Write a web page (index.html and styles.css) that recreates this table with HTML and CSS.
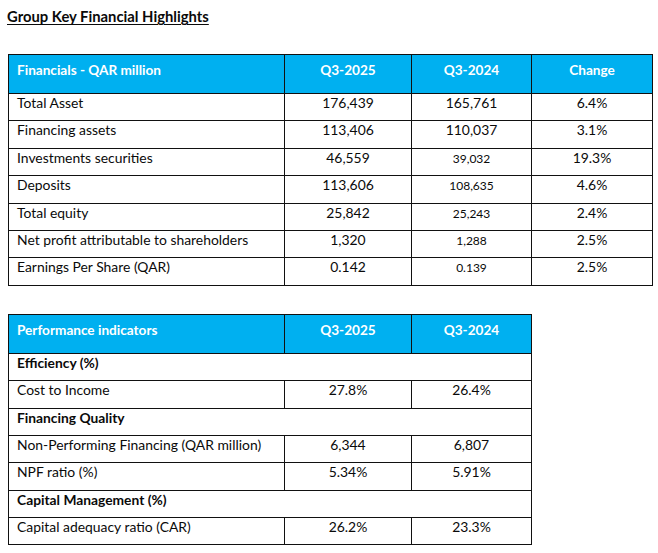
FILE: index.html
```html
<!DOCTYPE html>
<html>
<head>
<meta charset="utf-8">
<link rel="stylesheet" href="styles.css">
</head>
<body>
<h1 class="title">Group Key Financial Highlights</h1>
<table class="grid fin">
  <colgroup><col class="c-label"><col class="c-q1"><col class="c-q2"><col class="c-q3"></colgroup>
  <thead>
    <tr class="head"><th class="lbl">Financials - QAR million</th><th>Q3-2025</th><th>Q3-2024</th><th>Change</th></tr>
  </thead>
  <tbody>
    <tr><td class="lbl">Total Asset</td><td>176,439</td><td>165,761</td><td>6.4%</td></tr>
    <tr><td class="lbl">Financing assets</td><td>113,406</td><td>110,037</td><td>3.1%</td></tr>
    <tr><td class="lbl">Investments securities</td><td>46,559</td><td class="sm">39,032</td><td>19.3%</td></tr>
    <tr><td class="lbl">Deposits</td><td>113,606</td><td class="sm">108,635</td><td>4.6%</td></tr>
    <tr><td class="lbl">Total equity</td><td>25,842</td><td class="sm">25,243</td><td>2.4%</td></tr>
    <tr><td class="lbl">Net profit attributable to shareholders</td><td>1,320</td><td class="sm">1,288</td><td>2.5%</td></tr>
    <tr><td class="lbl">Earnings Per Share (QAR)</td><td>0.142</td><td class="sm">0.139</td><td>2.5%</td></tr>
  </tbody>
</table>
<table class="grid perf">
  <colgroup><col class="c-label"><col class="c-q1"><col class="c-q2"></colgroup>
  <thead>
    <tr class="head"><th class="lbl">Performance indicators</th><th>Q3-2025</th><th>Q3-2024</th></tr>
  </thead>
  <tbody>
    <tr><td class="lbl sec" colspan="3">Efficiency (%)</td></tr>
    <tr><td class="lbl">Cost to Income</td><td>27.8%</td><td>26.4%</td></tr>
    <tr><td class="lbl sec" colspan="3">Financing Quality</td></tr>
    <tr><td class="lbl">Non-Performing Financing (QAR million)</td><td>6,344</td><td>6,807</td></tr>
    <tr><td class="lbl">NPF ratio (%)</td><td>5.34%</td><td>5.91%</td></tr>
    <tr><td class="lbl sec" colspan="3">Capital Management (%)</td></tr>
    <tr><td class="lbl">Capital adequacy ratio (CAR)</td><td>26.2%</td><td>23.3%</td></tr>
  </tbody>
</table>
</body>
</html>
```
FILE: styles.css
```css
html, body {
  margin: 0;
  padding: 0;
  background: #ffffff;
}
body {
  font-family: Lato, "Open Sans", sans-serif;
  font-size: 13.9px;
  color: #0a0a0a;
  padding: 7px 0 0 8px;
}
.title {
  font-size: 14.8px;
  font-weight: 700;
  text-decoration: underline;
  text-underline-offset: 2px;
  margin: 0 0 0 -1px;
  line-height: 18px;
}
.grid {
  border-collapse: collapse;
  table-layout: fixed;
}
.fin {
  width: 644px;
  margin-top: 29px;
}
.perf {
  width: 523px;
  margin-top: 28px;
}
.c-label { width: 276px; }
.c-q1 { width: 127px; }
.c-q2 { width: 120px; }
.c-q3 { width: 121px; }
.grid th, .grid td {
  border: 1px solid #111111;
  padding: 0 8px 0 8px;
  height: 25px;
  box-sizing: border-box;
  line-height: 18px;
  vertical-align: top;
  text-align: center;
  font-weight: 400;
  white-space: nowrap;
}
.grid tr { height: 27.4px; }
.grid .head th {
  background: #00b0f0;
  color: #ffffff;
  font-weight: 700;
  font-size: 13.6px;
  padding-top: 6px;
  height: 39px;
}
.grid .head { height: 39px; }
.grid .lbl { text-align: left; }
.grid .sec { font-weight: 700; font-size: 13.8px; }
.grid .sm { font-size: 12px; padding-top: 1px; }
```
